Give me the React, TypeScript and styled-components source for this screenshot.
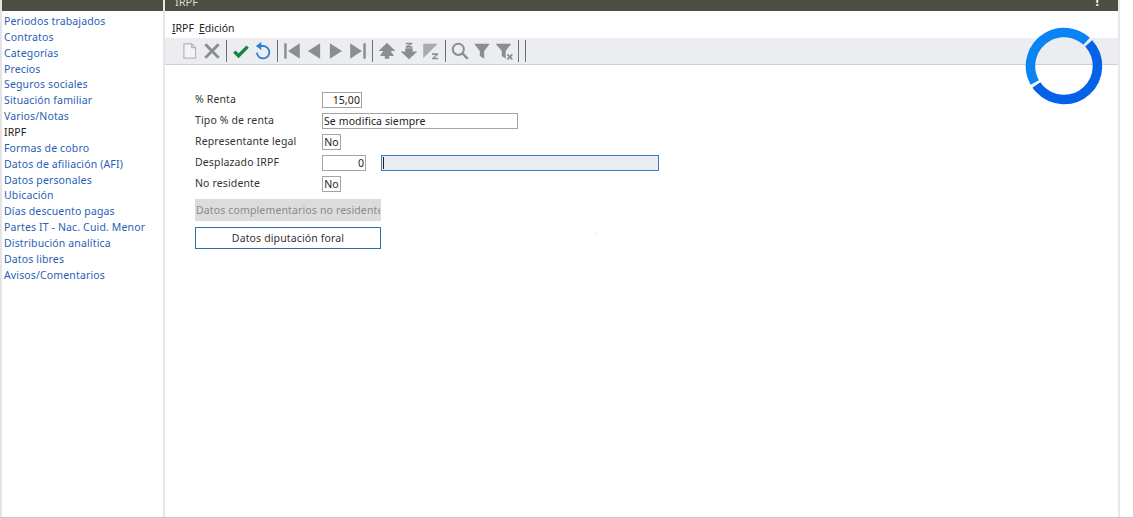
import React from "react";
import styled, { createGlobalStyle } from "styled-components";

const GlobalStyle = createGlobalStyle`
  html, body {
    margin: 0;
    padding: 0;
    background: #fff;
  }
  body {
    font-family: "Noto Sans", "Open Sans", sans-serif;
    font-size: 10.5px;
    color: #333;
  }
`;

const Page = styled.div`
  position: relative;
  width: 1133px;
  height: 518px;
  overflow: hidden;
  display: flex;
  box-sizing: border-box;
  border-bottom: 1px solid #c9c9c9;
`;

const Sidebar = styled.aside`
  width: 165px;
  flex: none;
  box-sizing: border-box;
  border-left: 2px solid #e4e4e4;
  border-right: 2px solid #e6e6e6;
`;

const TitleBar = styled.div`
  height: 11px;
  background: #4c4e42;
  color: #d9d9cf;
  display: flex;
  align-items: flex-end;
  justify-content: space-between;
  overflow: hidden;
  font-size: 11px;
  line-height: 18px;
`;

const SideList = styled.ul`
  list-style: none;
  margin: 3px 0 0;
  padding: 0 0 0 2px;
`;

const SideItem = styled.li<{ $active?: boolean }>`
  height: 15.87px;
  line-height: 15.87px;
  white-space: nowrap;
  letter-spacing: 0.14px;
  color: ${(p) => (p.$active ? "#222" : "#2a60b4")};
`;

const Main = styled.main`
  width: 955px;
  flex: none;
  box-sizing: border-box;
  border-right: 2px solid #e8e8e8;
`;

const MainTitle = styled.span`
  padding-left: 10px;
`;

const Kebab = styled.span`
  padding-right: 19px;
  font-weight: 700;
  color: #fff;
  font-size: 12px;
`;

const Menu = styled.div`
  height: 27px;
  display: flex;
  gap: 5px;
  align-items: flex-end;
  padding: 0 0 3px 7px;
  box-sizing: border-box;
  color: #222;
`;

const Mnemonic = styled.span`
  text-decoration: underline;
`;

const Toolbar = styled.div`
  height: 26px;
  padding-left: 14px;
  display: flex;
  align-items: center;
  background: #ecedf0;
  border-bottom: 1px solid #cfd0d2;
`;

const Tool = styled.span`
  width: 22px;
  height: 22px;
  flex: none;
  display: flex;
  align-items: center;
  justify-content: center;
`;

const Separator = styled.span`
  width: 7px;
  height: 22px;
  flex: none;
  display: flex;
  justify-content: center;
  &::before {
    content: "";
    width: 1.5px;
    background: #6d7073;
  }
`;

const FormGrid = styled.div`
  margin: 27px 0 0 30px;
  display: grid;
  grid-template-columns: 127px auto;
  grid-auto-rows: 16px;
  row-gap: 4.9px;
  align-items: center;
  justify-items: start;
`;

const Label = styled.label`
  color: #333;
  letter-spacing: 0.14px;
  white-space: nowrap;
  padding-bottom: 2px;
`;

const Field = styled.div<{ $width: number; $right?: boolean; $center?: boolean }>`
  width: ${(p) => p.$width}px;
  height: 16px;
  box-sizing: border-box;
  border: 1px solid #a4a4a4;
  background: #fff;
  color: #222;
  line-height: 14px;
  padding: 0 1px;
  white-space: nowrap;
  letter-spacing: 0.1px;
  text-align: ${(p) => (p.$right ? "right" : p.$center ? "center" : "left")};
`;

const FieldPair = styled.div`
  display: flex;
  gap: 15px;
`;

const FocusedField = styled.div`
  width: 278px;
  height: 16px;
  box-sizing: border-box;
  border: 1.5px solid #3f78bd;
  background: #e9edf2;
  padding: 1px 0 1px 1px;
  &::before {
    content: "";
    display: block;
    width: 1px;
    height: 100%;
    background: #222;
  }
`;

const Actions = styled.div`
  margin: 7px 0 0 30px;
  width: 186px;
  display: flex;
  flex-direction: column;
  gap: 6px;
`;

const ActionButton = styled.div<{ $disabled?: boolean }>`
  height: 22px;
  box-sizing: border-box;
  line-height: 20px;
  white-space: nowrap;
  overflow: hidden;
  letter-spacing: 0.14px;
  background: ${(p) => (p.$disabled ? "#dcdcdb" : "#fff")};
  color: ${(p) => (p.$disabled ? "#8a8a8a" : "#333")};
  border: 1.5px solid ${(p) => (p.$disabled ? "#dcdcdb" : "#2f6cb4")};
  text-align: ${(p) => (p.$disabled ? "left" : "center")};
`;

const Spinner = styled.svg`
  position: absolute;
  left: 1025px;
  top: 27px;
`;

const Speck = styled.span`
  position: absolute;
  left: 595px;
  top: 233px;
  width: 1px;
  height: 1px;
  background: #c4c4c4;
`;

const GREY = "#8b8d8f";
const LIGHT = "#a9abad";

const SIDE_ITEMS = [
  "Periodos trabajados",
  "Contratos",
  "Categorías",
  "Precios",
  "Seguros sociales",
  "Situación familiar",
  "Varios/Notas",
  "IRPF",
  "Formas de cobro",
  "Datos de afiliación (AFI)",
  "Datos personales",
  "Ubicación",
  "Días descuento pagas",
  "Partes IT - Nac. Cuid. Menor",
  "Distribución analítica",
  "Datos libres",
  "Avisos/Comentarios",
];

function ToolIcon({ children }: { children: React.ReactNode }) {
  return (
    <Tool>
      <svg width="20" height="20" viewBox="0 0 18 18">
        {children}
      </svg>
    </Tool>
  );
}

function App() {
  return (
    <Page>
      <GlobalStyle />
      <Sidebar>
        <TitleBar />
        <SideList>
          {SIDE_ITEMS.map((item) => (
            <SideItem key={item} $active={item === "IRPF"}>
              {item}
            </SideItem>
          ))}
        </SideList>
      </Sidebar>

      <Main>
        <TitleBar>
          <MainTitle>IRPF</MainTitle>
          <Kebab>!</Kebab>
        </TitleBar>
        <Menu>
          <span>
            <Mnemonic>I</Mnemonic>RPF
          </span>
          <span>
            <Mnemonic>E</Mnemonic>dición
          </span>
        </Menu>
        <Toolbar>
          <ToolIcon>
            <path d="M3.5 2.5h7L14 6v9.5H3.5z M10.5 2.5V6H14" fill="#f4f4f4" stroke="#b5b6b8" strokeWidth="1.1" />
          </ToolIcon>
          <ToolIcon>
            <path d="M3 3l12 12M15 3L3 15" stroke={GREY} strokeWidth="2.6" fill="none" />
          </ToolIcon>
          <Separator />
          <ToolIcon>
            <path d="M3 9.5l3.8 3.8L15 5" stroke="#15873d" strokeWidth="3" fill="none" />
          </ToolIcon>
          <ToolIcon>
            <path d="M5.5 4.5h4a5.6 5.6 0 1 1-6 6" stroke="#2f7fd0" strokeWidth="1.6" fill="none" />
            <path d="M7.5 1v7L2.5 4.5z" fill="#2f7fd0" />
          </ToolIcon>
          <Separator />
          <ToolIcon>
            <path d="M2 2h2.2v14H2z M16 2v14L5.5 9z" fill={GREY} />
          </ToolIcon>
          <ToolIcon>
            <path d="M14.5 2v14L3.5 9z" fill={GREY} />
          </ToolIcon>
          <ToolIcon>
            <path d="M3.5 2v14L14.5 9z" fill={GREY} />
          </ToolIcon>
          <ToolIcon>
            <path d="M13.8 2H16v14h-2.2z M2 2v14L12.5 9z" fill={GREY} />
          </ToolIcon>
          <Separator />
          <ToolIcon>
            <path d="M9 1.5L16.5 9h-4.2l3 4.5H11V16H7v-2.5H2.7l3-4.5H1.5z" fill={GREY} />
          </ToolIcon>
          <ToolIcon>
            <path d="M9 16.5L1.5 9.5h4.2V6.5h6.6v3h4.2z M6 1.5h6v1.3L8.5 4.5H12V6H6V4.7l3.5-1.8H6z" fill={GREY} />
          </ToolIcon>
          <ToolIcon>
            <path d="M2 2.5h13L2 15.5z" fill={LIGHT} />
            <path d="M10 11h5.5v1.2L12 15h3.5v1.5H10v-1.2l3.5-2.8H10z" fill={GREY} />
          </ToolIcon>
          <Separator />
          <ToolIcon>
            <circle cx="7.5" cy="7.5" r="5" stroke={GREY} strokeWidth="1.8" fill="none" />
            <path d="M11 11l5 5" stroke={GREY} strokeWidth="2.2" />
          </ToolIcon>
          <ToolIcon>
            <path d="M2 2.5h14L11 9v7l-4-2.5V9z" fill={GREY} />
          </ToolIcon>
          <ToolIcon>
            <path d="M1.5 2.5h14L10.5 9v7L7 13.5V9z" fill={GREY} />
            <path d="M12 12l4.5 4.5M16.5 12L12 16.5" stroke={GREY} strokeWidth="1.6" />
          </ToolIcon>
          <Separator />
          <Separator />
        </Toolbar>

        <FormGrid>
          <Label>% Renta</Label>
          <Field $width={40} $right>15,00</Field>
          <Label>Tipo % de renta</Label>
          <Field $width={196}>Se modifica siempre</Field>
          <Label>Representante legal</Label>
          <Field $width={19} $center>No</Field>
          <Label>Desplazado IRPF</Label>
          <FieldPair>
            <Field $width={44} $right>0</Field>
            <FocusedField />
          </FieldPair>
          <Label>No residente</Label>
          <Field $width={19} $center>No</Field>
        </FormGrid>
        <Actions>
          <ActionButton $disabled>Datos complementarios no residentes</ActionButton>
          <ActionButton>Datos diputación foral</ActionButton>
        </Actions>
      </Main>

      <Speck />
      <Spinner width="78" height="78" viewBox="0 0 78 78">
        <circle
          cx="39" cy="39" r="33.5" fill="none" stroke="#0a84f5" strokeWidth="9.5"
          pathLength="360" strokeDasharray="162 198"
          transform="rotate(150.5 39 39)"
        />
        <circle
          cx="39" cy="39" r="33.5" fill="none" stroke="#0561e8" strokeWidth="9.5"
          pathLength="360" strokeDasharray="188 172"
          transform="rotate(-42.5 39 39)"
        />
      </Spinner>
    </Page>
  );
}

export default App;
